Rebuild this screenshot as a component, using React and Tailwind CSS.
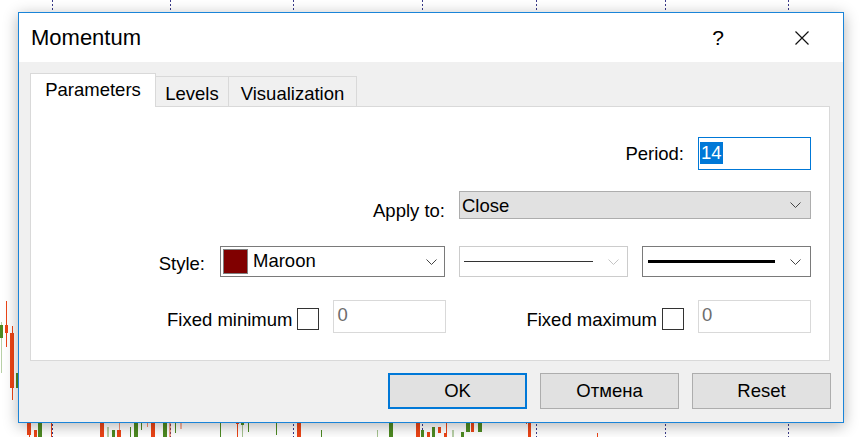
import React from 'react';

// candles peeking out around the dialog: [x, width, top, bottom, colour, opacity]
const candles = [
  [0, 3, 325, 338, 'g', 1], [1, 1, 322, 373, 'g', 0.4],
  [5, 3, 325, 333, 'r', 1], [6, 1, 301, 347, 'r', 1],
  [10, 4, 333, 388, 'r', 1], [12, 1, 326, 400, 'r', 1],
  [16, 3, 373, 388, 'g', 1],
  [27, 4, 422, 435, 'r', 1], [29, 1, 435, 437, 'r', 1],
  [34, 3, 430, 437, 'r', 1], [38, 4, 422, 437, 'g', 1],
  [51, 1, 422, 437, 'r', 1], [100, 4, 422, 437, 'r', 1],
  [107, 2, 427, 437, 'g', 0.4], [112, 3, 430, 437, 'g', 1],
  [117, 4, 430, 437, 'r', 1], [119, 1, 422, 430, 'r', 0.6],
  [130, 1, 427, 437, 'g', 1], [134, 4, 422, 437, 'g', 1],
  [141, 1, 422, 430, 'g', 1], [147, 1, 422, 427, 'r', 0.6],
  [151, 4, 422, 437, 'r', 1], [163, 4, 422, 437, 'g', 1],
  [169, 2, 422, 437, 'r', 0.5], [175, 1, 422, 433, 'g', 1],
  [180, 2, 422, 429, 'r', 0.4], [220, 1, 422, 437, 'g', 1],
  [236, 3, 422, 424, 'r', 1], [237, 1, 424, 437, 'r', 1],
  [241, 3, 422, 425, 'g', 1], [242, 1, 425, 437, 'g', 0.5],
  [248, 1, 422, 432, 'g', 1], [276, 1, 422, 435, 'g', 1],
  [297, 4, 422, 437, 'r', 1], [321, 1, 430, 437, 'g', 1],
  [377, 1, 430, 437, 'g', 0.5], [389, 4, 422, 437, 'g', 1],
  [416, 4, 422, 437, 'r', 1], [421, 3, 430, 437, 'g', 1],
  [427, 3, 432, 437, 'r', 1], [432, 3, 427, 437, 'g', 1],
  [438, 3, 427, 433, 'r', 1], [444, 3, 433, 437, 'r', 1],
  [446, 1, 422, 437, 'r', 1], [452, 2, 430, 437, 'g', 0.4],
  [461, 3, 432, 437, 'g', 1], [466, 4, 422, 432, 'g', 1],
  [471, 3, 422, 432, 'r', 1], [478, 4, 422, 432, 'g', 1],
  [526, 1, 422, 424, 'r', 1], [528, 3, 422, 437, 'r', 1],
  [597, 1, 433, 437, 'r', 1],
];

const gridLines = [52, 170, 293, 422, 536, 665, 788];

const ChartBackdrop = () => (
  <svg className="absolute inset-0" width="860" height="437" viewBox="0 0 860 437">
    {gridLines.map((x) => (
      <line key={x} x1={x + 0.5} y1="0" x2={x + 0.5} y2="437" stroke="#3a3a8a" strokeDasharray="2 2" />
    ))}
    {candles.map(([x, w, t, b, c, o], i) => (
      <rect key={i} x={x} y={t} width={w} height={b - t} fill={c === 'r' ? '#ec4517' : '#4d8a22'} opacity={o} />
    ))}
  </svg>
);

const Chevron = ({ light }) => (
  <svg width="11" height="6" viewBox="0 0 11 6">
    <polyline points="0.5,0.5 5.5,5.5 10.5,0.5" fill="none" stroke={light ? '#c4c4c4' : '#444'} strokeWidth="1" />
  </svg>
);

const Tab = ({ label, active, width }) =>
  active ? (
    <div className={`${width} h-[34px] -mb-px relative z-10 bg-white border border-b-0 border-[#d9d9d9] flex justify-center pt-[5px] leading-[22px]`}>
      {label}
    </div>
  ) : (
    <div className={`${width} h-[30px] bg-[#f0f0f0] border border-b-0 border-l-0 border-[#d9d9d9] flex justify-center pt-[6px] leading-[22px]`}>
      {label}
    </div>
  );

const Button = ({ label, primary }) => (
  <div
    className={`w-[139px] h-[36px] bg-[#e1e1e1] flex items-center justify-center ${
      primary ? 'border-2 border-[#0078d7]' : 'border border-[#adadad]'
    }`}
  >
    {label}
  </div>
);

const Checkbox = () => <div className="w-[22px] h-[22px] border border-[#333] bg-white" />;

const DisabledInput = () => (
  <div className="w-[113px] h-[33px] border border-[#d9d9d9] bg-white pl-[3px] pt-[3px] leading-[21px] text-[#6d6d6d]">0</div>
);

export default function App() {
  return (
    <div className="relative w-[860px] h-[437px] overflow-hidden bg-white text-black text-[18.5px] font-['Liberation_Sans',Arial,sans-serif]">
      <ChartBackdrop />

      <div className="absolute left-[18px] top-[12px] w-[826px] h-[411px] border border-[#1a84d8] bg-[#f0f0f0] shadow-[0_3px_14px_rgba(0,0,0,0.3)] flex flex-col">
        {/* title bar */}
        <div className="h-[49px] bg-white flex items-center pl-[12px] pr-[34px]">
          <div className="text-[22px] flex-1">Momentum</div>
          <div className="text-[21px] w-[14px] text-center mr-[70px]">?</div>
          <svg width="14" height="14" viewBox="0 0 14 14">
            <path d="M0.5 0.5 L13.5 13.5 M13.5 0.5 L0.5 13.5" stroke="#111" strokeWidth="1.2" />
          </svg>
        </div>

        <div className="flex-1 pl-[11px] pr-[12px] pt-[11px] flex flex-col">
          {/* tabs */}
          <div className="flex items-end">
            <Tab label="Parameters" active width="w-[126px]" />
            <Tab label="Levels" width="w-[73px]" />
            <Tab label="Visualization" width="w-[128px]" />
          </div>

          {/* panel */}
          <div className="w-[800px] h-[255px] bg-white border border-[#d9d9d9] pt-[30px] pr-[18px] flex flex-col items-end">
            <div className="h-[33px] flex items-center gap-[14px]">
              <span>Period:</span>
              <div className="w-[113px] h-[33px] border border-[#0078d7] bg-white pl-[1px] pt-[1px]">
                <span className="inline-block bg-[#0078d7] text-white leading-[22px] px-[1px]">14</span>
              </div>
            </div>

            <div className="mt-[21px] h-[28px] flex items-center gap-[14px]">
              <span className="pt-[10px] leading-[21px]">Apply to:</span>
              <div className="w-[352px] h-[28px] bg-[#e1e1e1] border border-[#adadad] flex items-center justify-between pl-[2px] pr-[9px]">
                <span className="leading-[21px]">Close</span>
                <Chevron />
              </div>
            </div>

            <div className="mt-[27px] h-[31px] flex items-center gap-[14px]">
              <span className="pt-[4px] leading-[21px] mr-px">Style:</span>
              <div className="w-[225px] h-[31px] bg-white border border-[#7a7a7a] flex items-center pl-[2px] pr-[7px]">
                <div className="w-[25px] h-[25px] border border-[#808080] bg-[#800000]" />
                <span className="ml-[5px] flex-1 pb-[3px] leading-[21px]">Maroon</span>
                <Chevron />
              </div>
              <div className="w-[169px] h-[31px] bg-white border border-[#cccccc] flex items-center pl-[4px] pr-[8px]">
                <div className="w-[129px] h-px bg-[#333]" />
                <div className="flex-1" />
                <Chevron light />
              </div>
              <div className="w-[169px] h-[31px] bg-white border border-[#7a7a7a] flex items-center pl-[5px] pr-[9px]">
                <div className="w-[127px] h-[3px] bg-black" />
                <div className="flex-1" />
                <Chevron />
              </div>
            </div>

            <div className="mt-[23px] h-[33px] flex items-center">
              <span className="pt-[5px] leading-[21px]">Fixed minimum</span>
              <div className="ml-[5px] pt-[5px]"><Checkbox /></div>
              <div className="ml-[14px]"><DisabledInput /></div>
              <span className="ml-[80px] pt-[5px] leading-[21px]">Fixed maximum</span>
              <div className="ml-[5px] pt-[5px]"><Checkbox /></div>
              <div className="ml-[14px]"><DisabledInput /></div>
            </div>
          </div>

          {/* buttons */}
          <div className="mt-[12px] flex justify-end gap-[13px]">
            <Button label="OK" primary />
            <Button label="Отмена" />
            <Button label="Reset" />
          </div>
        </div>
      </div>
    </div>
  );
}
